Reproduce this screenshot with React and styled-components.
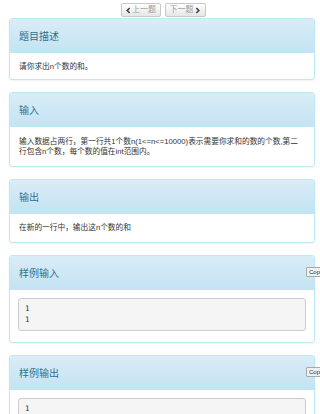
import styled, { createGlobalStyle } from 'styled-components';

const Global = createGlobalStyle`
  html, body {
    margin: 0;
    padding: 0;
    background: #ffffff;
    overflow: hidden;
  }
  body {
    font-family: "Liberation Sans", "Noto Sans CJK SC", sans-serif;
    color: #333333;
  }
`;

const Page = styled.div`
  width: 306px;
  padding: 3px 0 0 9px;
`;

const Pager = styled.div`
  display: flex;
  justify-content: center;
  gap: 4px;
  padding-left: 2px;
`;

const PageButton = styled.button`
  display: flex;
  align-items: center;
  justify-content: center;
  gap: 1px;
  height: 14px;
  width: ${p => p.w}px;
  padding: 0;
  white-space: nowrap;
  border: 1px solid #c8c8c8;
  border-radius: 2px;
  background: linear-gradient(#ffffff, #e6e6e6);
  color: #9a9a9a;
  font-family: "Liberation Sans", "Noto Sans CJK SC", sans-serif;
  font-size: 8px;
  line-height: 12px;
  svg {
    flex: none;
    width: 6px;
    height: 7px;
    fill: #444;
  }
`;

const Panel = styled.section`
  border: 1px solid #bce8f1;
  border-radius: 3px;
  background: #ffffff;
  margin-top: ${p => p.first ? 1 : 12}px;
  box-shadow: 0 1px 2px rgba(0, 0, 0, 0.05);
`;

const Heading = styled.div`
  position: relative;
  height: 33px;
  display: flex;
  align-items: center;
  padding: 0 9px;
  border-bottom: 1px solid #bce8f1;
  border-radius: 2px 2px 0 0;
  background: linear-gradient(#d9edf7, #c4e3f3);
`;

const Title = styled.h3`
  margin: 0;
  font-size: 10px;
  font-weight: normal;
  color: #31708f;
`;

const CopyButton = styled.button`
  position: absolute;
  left: 296px;
  top: 11px;
  height: 10px;
  width: 22px;
  padding: 0 2px;
  border: 1px solid #a9a9a9;
  border-radius: 1px;
  background: #f0f0f0;
  color: #333;
  font-family: "Liberation Sans", sans-serif;
  font-size: 6px;
  line-height: 8px;
  text-align: left;
`;

const Body = styled.div`
  padding: ${p => p.pad || '9px 9px 7px'};
  font-size: 7.7px;
  line-height: 10px;
`;

const Pre = styled.pre`
  margin: 0;
  padding: 5px 6px;
  border: 1px solid #cccccc;
  border-radius: 3px;
  background: #f5f5f5;
  font-family: "DejaVu Sans Mono", "Liberation Mono", monospace;
  font-size: 7.5px;
  line-height: 10.5px;
  color: #333;
`;

const Chevron = ({ dir }) => (
  <svg viewBox="0 0 8 10">
    {dir === 'left'
      ? <path d="M5.6 0.6 L7.2 2.2 L4.4 5 L7.2 7.8 L5.6 9.4 L1.2 5 Z" />
      : <path d="M2.4 0.6 L0.8 2.2 L3.6 5 L0.8 7.8 L2.4 9.4 L6.8 5 Z" />}
  </svg>
);

const Section = ({ title, first, copy, children, pad }) => (
  <Panel first={first}>
    <Heading>
      <Title>{title}</Title>
      {copy && <CopyButton>Copy</CopyButton>}
    </Heading>
    <Body pad={pad}>{children}</Body>
  </Panel>
);

export default function App() {
  return (
    <Page>
      <Global />
      <Pager>
        <PageButton w={40}><Chevron dir="left" />上一题</PageButton>
        <PageButton w={41}>下一题<Chevron dir="right" /></PageButton>
      </Pager>
      <Section title="题目描述" first>请你求出n个数的和。</Section>
      <Section title="输入" pad="10px 9px 9px">
        输入数据占两行，第一行共1个数n(1&lt;=n&lt;=10000)表示需要你求和的数的个数,第二行包含n个数，每个数的值在int范围内。
      </Section>
      <Section title="输出" pad="9px 9px 9px">在新的一行中，输出这n个数的和</Section>
      <Section title="样例输入" copy pad="8px 8px 11px 8px">
        <Pre>{'1\n1'}</Pre>
      </Section>
      <Section title="样例输出" copy pad="8px 8px 11px 8px">
        <Pre>{'1'}</Pre>
      </Section>
    </Page>
  );
}
